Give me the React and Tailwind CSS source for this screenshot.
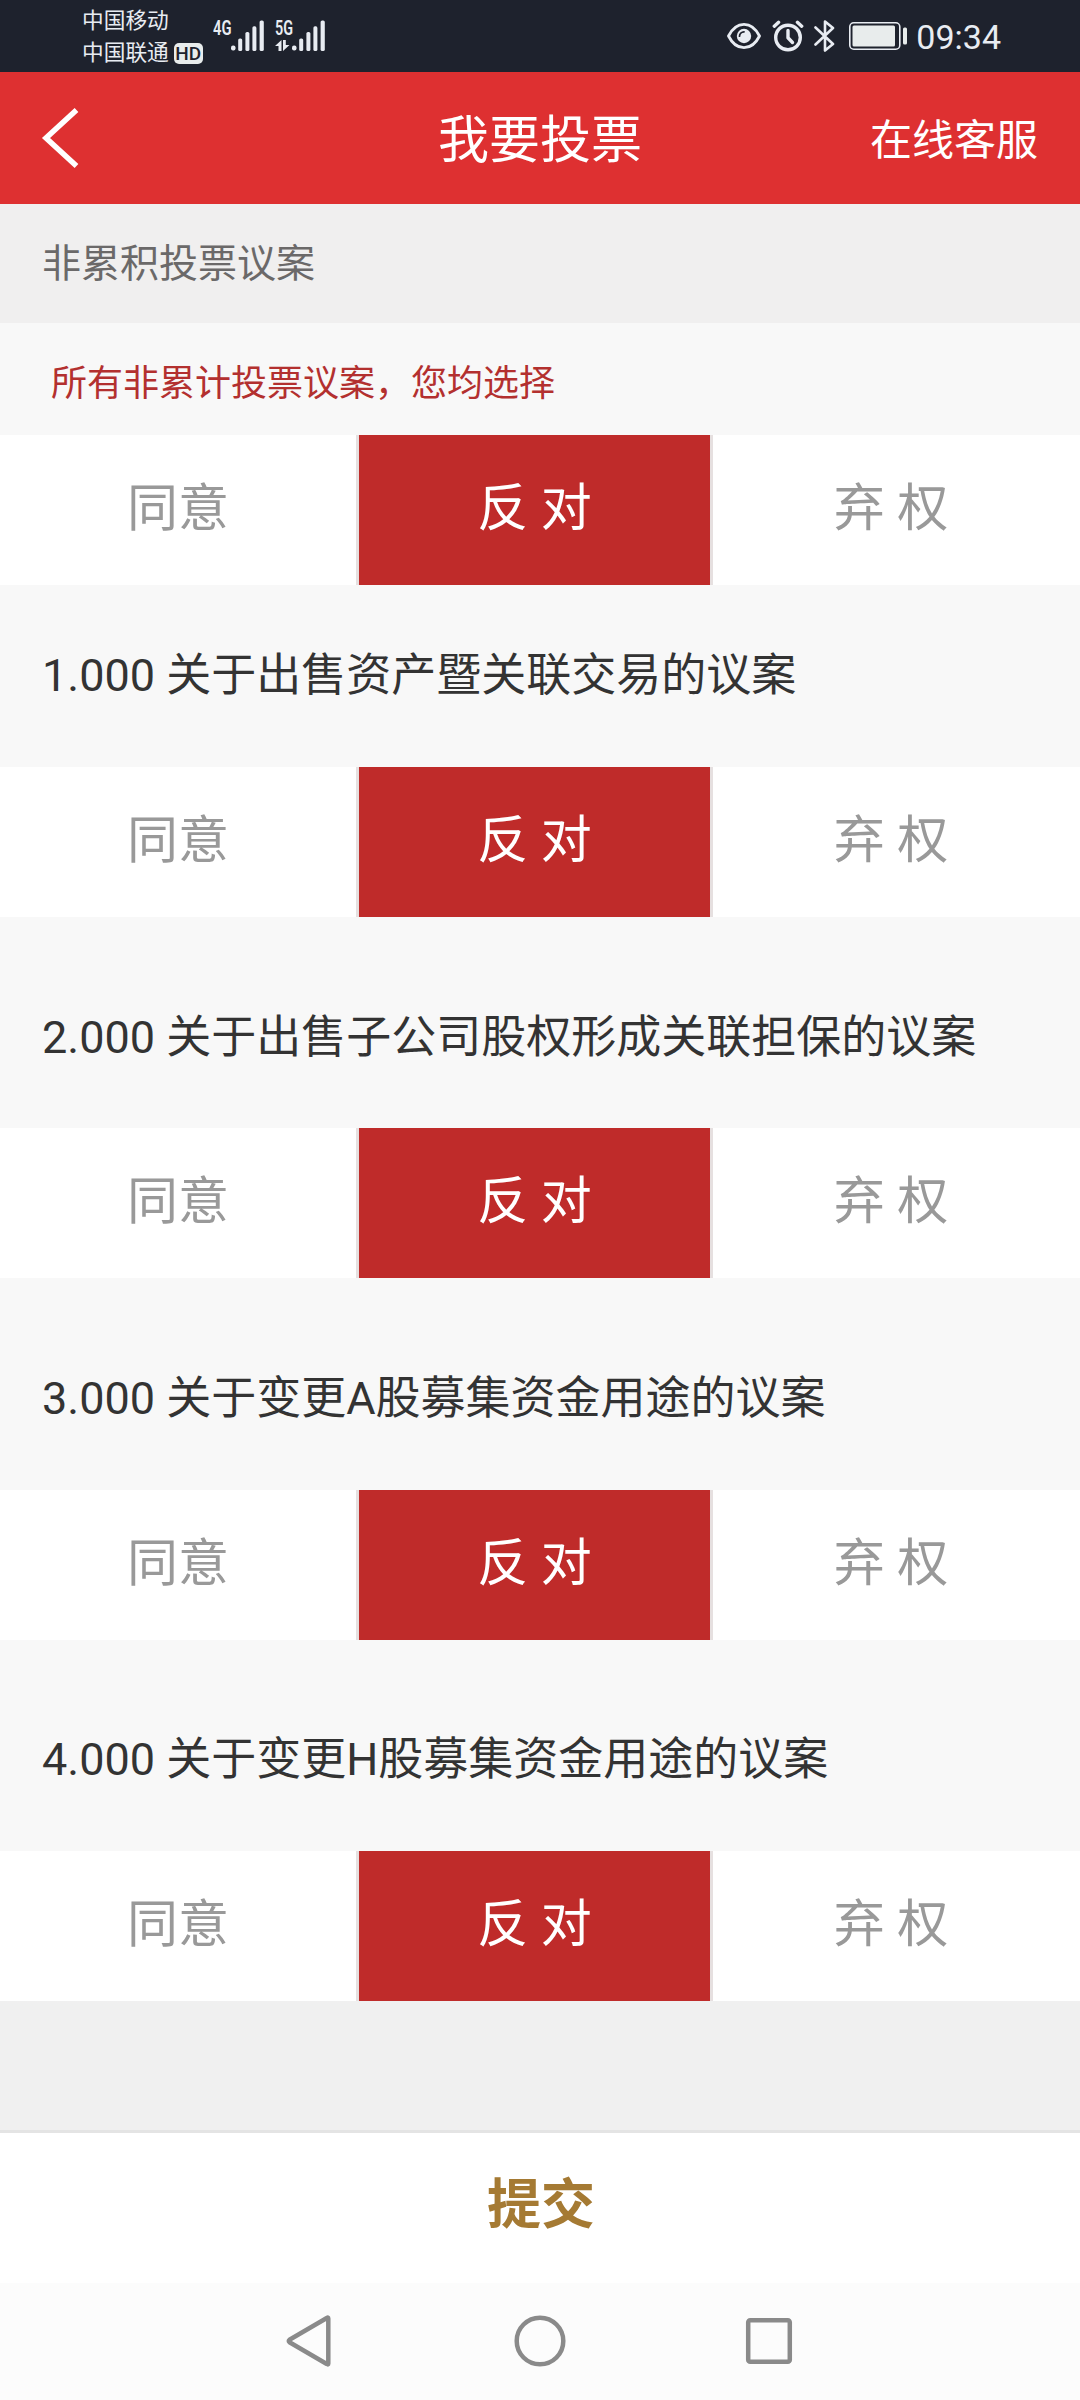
import { useState } from 'react';

const CHOICES = ['同意', '反 对', '弃 权'];

const PROPOSALS = [
  { no: '1.000', title: '关于出售资产暨关联交易的议案' },
  { no: '2.000', title: '关于出售子公司股权形成关联担保的议案' },
  { no: '3.000', title: '关于变更A股募集资金用途的议案' },
  { no: '4.000', title: '关于变更H股募集资金用途的议案' },
];

const SignalBars = () => (
  <svg className="h-[31px] w-[34px]" viewBox="0 0 34 31" fill="currentColor">
    <rect x="0" y="25.5" width="4.5" height="5" rx="2" />
    <rect x="7.2" y="18.5" width="4" height="12.5" rx="1.6" />
    <rect x="14.4" y="12" width="4" height="19" rx="1.6" />
    <rect x="21.4" y="6.3" width="4" height="24.7" rx="1.6" />
    <rect x="28.6" y="0.5" width="4.2" height="30.5" rx="1.6" />
  </svg>
);

const StatusBar = () => (
  <div className="flex h-[72px] items-start bg-[#1e222d] text-[#e8ecf2]">
    <div className="ml-[82px] mt-[5px] text-[21.7px] leading-[32px]">
      <div>中国移动</div>
      <div className="flex items-center">
        <span>中国联通</span>
        <span className="ml-[5px] flex h-[21px] w-[29px] items-center justify-center rounded-[5px] bg-[#e8ecec] text-[19px] font-medium leading-none text-[#1e222d]">
          HD
        </span>
      </div>
    </div>

    <div className="ml-[10px] mt-[20px] flex">
      <span className="w-[18px] origin-left scale-x-[0.74] text-[20px] font-semibold leading-[16px]">4G</span>
      <SignalBars />
    </div>
    <div className="ml-[10px] mt-[20px] flex">
      <div className="w-[17px]">
        <div className="w-[18px] origin-left scale-x-[0.72] text-[20px] font-semibold leading-[16px]">5G</div>
        <svg className="mt-[4px] h-[11px] w-[15px]" viewBox="0 0 15 11" fill="currentColor">
          <path d="M3.5 11V6H0L6.500 0V11Z" />
          <path d="M8 0H10.800V5H14.500L8 11Z" />
        </svg>
      </div>
      <SignalBars />
    </div>

    <div className="ml-auto mr-[79px] flex h-[72px] items-center">
      <svg className="h-[28px] w-[34px]" viewBox="0 0 34 28" fill="none">
        <path
          d="M1.5 14C5 7 10.5 2.3 17 2.3S29 7 32.5 14C29 21 23.500 25.700 17 25.700S5 21 1.500 14Z"
          stroke="currentColor"
          strokeWidth="2.8"
          strokeLinejoin="round"
        />
        <circle cx="17" cy="14" r="7.2" fill="currentColor" />
        <path d="M12.500 14.200A4.500 4.500 0 0 1 17 9.800" stroke="#1e222d" strokeWidth="1.8" strokeLinecap="round" />
      </svg>
      <svg className="ml-[11px] h-[32px] w-[32px]" viewBox="0 0 32 32" fill="none" stroke="currentColor" strokeLinecap="round">
        <circle cx="16" cy="17.500" r="12.300" strokeWidth="3.400" />
        <path d="M16 10.500V17.800L20.500 22.500" strokeWidth="3.400" strokeLinejoin="round" />
        <path d="M2.300 6.200L6.600 2.300M25.400 2.300L29.700 6.200" strokeWidth="3.400" />
      </svg>
      <svg className="ml-[10px] h-[34px] w-[22px]" viewBox="0 0 22 34" fill="none" stroke="currentColor" strokeWidth="2.600">
        <path d="M1.500 8.500L19 25L11 31.500V2.500L19 9L1.500 25.500" strokeLinejoin="round" strokeLinecap="round" />
      </svg>
      <svg className="ml-[13px] h-[28px] w-[59px]" viewBox="0 0 59 28">
        <rect x="0.800" y="0.800" width="50" height="26.400" rx="4" fill="none" stroke="currentColor" strokeWidth="1.600" />
        <rect x="3.500" y="3.500" width="42.500" height="21" rx="1.500" fill="#e8ecec" />
        <rect x="54" y="5.500" width="4" height="17" rx="1.500" fill="#e8ecec" />
      </svg>
      <span className="ml-[8px] pt-[2px] text-[34px] leading-none">09:34</span>
    </div>
  </div>
);

const Header = () => (
  <div className="grid h-[132px] grid-cols-3 items-center bg-[#de3031] text-white">
    <svg className="mb-[1px] ml-[40px] h-[62px] w-[40px]" viewBox="0 0 40 62" fill="none" stroke="currentColor" strokeWidth="5.500">
      <path d="M36.500 3L6 31L36.500 59" />
    </svg>
    <h1 className="pt-[5px] text-center text-[51px] leading-none">我要投票</h1>
    <button className="mr-[42px] justify-self-end pt-[5px] text-[42px] leading-none">在线客服</button>
  </div>
);

const ChoiceRow = ({ value, onChange }) => (
  <div className="grid h-[150px] grid-cols-[359px_354px_356px] bg-white">
    {CHOICES.map((choice, idx) => (
      <button
        key={choice}
        onClick={() => onChange(choice)}
        className={`pb-[3px] text-[51px] leading-none ${idx < 2 ? 'border-r-[3px] border-[#e6e0e0]' : ''} ${
          value === choice ? 'bg-[#bf2b2a] bg-clip-padding text-white' : 'text-[#999999]'
        }`}
      >
        {choice}
      </button>
    ))}
  </div>
);

const NavBar = () => (
  <div className="flex h-[117px] items-start bg-[#fcfcfc] text-[#8a8a8a]">
    <svg className="ml-[284px] mt-[30px] h-[56px] w-[50px]" viewBox="0 0 50 56" fill="none" stroke="currentColor" strokeWidth="4.500">
      <path d="M44.300 5.500V50.500Q44.300 52 42.800 51L5.500 29.200Q4 28 5.500 26.800L42.800 5Q44.300 4 44.300 5.500Z" strokeLinejoin="round" />
    </svg>
    <svg className="ml-[178px] mt-[30px] h-[56px] w-[56px]" viewBox="0 0 56 56" fill="none" stroke="currentColor" strokeWidth="4.500">
      <circle cx="28" cy="28" r="23.300" />
    </svg>
    <svg className="ml-[176px] mt-[30px] h-[56px] w-[50px]" viewBox="0 0 50 56" fill="none" stroke="currentColor" strokeWidth="4.500">
      <rect x="4.200" y="7.200" width="41.600" height="41.600" rx="2" />
    </svg>
  </div>
);

export default function App() {
  const [votes, setVotes] = useState(PROPOSALS.map(() => '反 对'));
  const [all, setAll] = useState('反 对');

  const voteAll = (choice) => {
    setAll(choice);
    setVotes(PROPOSALS.map(() => choice));
  };

  const vote = (idx, choice) => {
    setVotes(votes.map((v, i) => (i === idx ? choice : v)));
  };

  return (
    <div className="flex h-[2400px] w-[1080px] flex-col bg-[#f0f0f0] font-[Roboto,'Noto_Sans_CJK_SC',sans-serif]">
      <StatusBar />
      <Header />

      <div className="flex h-[119px] items-center bg-[#f0efef] pl-[42px] pt-[2px] text-[39px] leading-none text-[#6b6969]">
        非累积投票议案
      </div>

      {/* Vote for everything at once */}
      <div className="flex h-[112px] items-center bg-[#f8f8f8] pl-[51px] pt-[10px] text-[36px] leading-none text-[#b3302f]">
        所有非累计投票议案，您均选择
      </div>
      <ChoiceRow value={all} onChange={voteAll} />

      {PROPOSALS.map((p, idx) => (
        <div key={p.no}>
          <div
            className={`flex items-center bg-[#f8f8f8] pl-[42px] text-[45px] leading-none text-[#333333] ${
              idx === 0 ? 'h-[182px] pb-[2px]' : 'h-[211.33px] pt-[29px]'
            }`}
          >
            {p.no} {p.title}
          </div>
          <ChoiceRow value={votes[idx]} onChange={(choice) => vote(idx, choice)} />
        </div>
      ))}

      <div className="mt-auto border-t-[3px] border-[#e4e4e4] bg-white">
        <button className="block h-[150px] w-full pb-[4px] pl-[2px] text-[54px] font-bold leading-none text-[#a57a33]">提交</button>
      </div>
      <NavBar />
    </div>
  );
}
